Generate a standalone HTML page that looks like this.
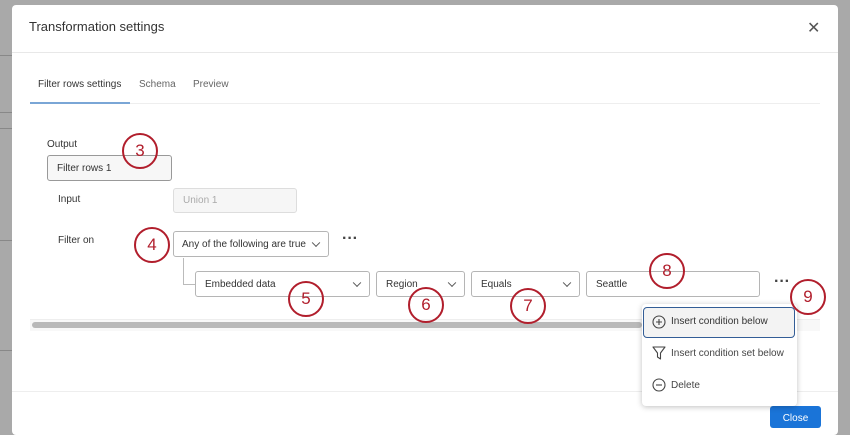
<!DOCTYPE html>
<html><head><style>
*{box-sizing:border-box}
body{margin:0;width:850px;height:425px;overflow:hidden;background:#a9a9a9;font-family:"Liberation Sans",sans-serif;position:relative;color:#333}
.a{position:absolute}
.modal{left:12px;top:5px;width:826px;height:430px;background:#fff;border-radius:4px}
.box{position:absolute;border:1px solid #b5b5b5;border-radius:3px;background:#fff;font-size:10px;color:#333;padding-left:9px;display:flex;align-items:center;white-space:nowrap}
.chev{position:absolute;right:9px;top:50%;width:6px;height:6px;border-right:1.2px solid #555;border-bottom:1.2px solid #555;transform:translateY(-70%) rotate(45deg)}
.c{position:absolute;width:36px;height:36px;border:2.5px solid #b11e2c;border-radius:50%;background:transparent;color:#b11e2c;font-size:17px;display:flex;align-items:center;justify-content:center}
.lbl{position:absolute;font-size:10px;color:#333;white-space:nowrap}
.dots{position:absolute;font-size:16px;color:#444;letter-spacing:0px;font-weight:bold}
</style></head><body>
<div class="a" style="left:0;top:55px;width:12px;height:1px;background:#888"></div>
<div class="a" style="left:0;top:112px;width:12px;height:1px;background:#888"></div>
<div class="a" style="left:0;top:128px;width:12px;height:1px;background:#888"></div>
<div class="a" style="left:0;top:240px;width:12px;height:1px;background:#888"></div>
<div class="a" style="left:0;top:350px;width:12px;height:1px;background:#888"></div>
<div class="a modal"></div>
<div class="a" style="left:29px;top:19px;font-size:13px;color:#333">Transformation settings</div>
<div class="a" style="left:807px;top:18px;font-size:16px;color:#555">✕</div>
<div class="a" style="left:12px;top:52px;width:826px;height:1px;background:#e8e8e8"></div>
<div class="a" style="left:38px;top:79px;font-size:10px;color:#333">Filter rows settings</div>
<div class="a" style="left:139px;top:79px;font-size:10px;color:#666">Schema</div>
<div class="a" style="left:193px;top:79px;font-size:10px;color:#666">Preview</div>
<div class="a" style="left:30px;top:103px;width:790px;height:1px;background:#eee"></div>
<div class="a" style="left:30px;top:102px;width:100px;height:2px;background:#7aa6d6"></div>
<div class="lbl" style="left:47px;top:139px">Output</div>
<div class="box" style="left:47px;top:155px;width:125px;height:26px;background:#f7f7f7;border-color:#999">Filter rows 1</div>
<div class="lbl" style="left:58px;top:194px">Input</div>
<div class="box" style="left:173px;top:188px;width:124px;height:25px;background:#f6f6f6;border-color:#ddd;color:#aaa">Union 1</div>
<div class="lbl" style="left:58px;top:235px">Filter on</div>
<div class="box" style="left:173px;top:231px;width:156px;height:26px;padding-left:8px">Any of the following are true<span class="chev"></span></div>
<div class="dots" style="left:342px;top:230px">···</div>
<div class="a" style="left:183px;top:258px;width:12px;height:27px;border-left:1px solid #bbb;border-bottom:1px solid #bbb"></div>
<div class="box" style="left:195px;top:271px;width:175px;height:26px">Embedded data<span class="chev"></span></div>
<div class="box" style="left:376px;top:271px;width:89px;height:26px">Region<span class="chev"></span></div>
<div class="box" style="left:471px;top:271px;width:109px;height:26px">Equals<span class="chev"></span></div>
<div class="box" style="left:586px;top:271px;width:174px;height:26px">Seattle</div>
<div class="dots" style="left:774px;top:273px">···</div>
<div class="a" style="left:30px;top:319px;width:790px;height:12px;background:#f8f8f8;border-top:1px solid #eee"></div>
<div class="a" style="left:32px;top:322px;width:610px;height:6px;background:#b9b9b9;border-radius:3px"></div>
<div class="a" style="left:12px;top:391px;width:826px;height:1px;background:#eee"></div>
<div class="a" style="left:770px;top:406px;width:51px;height:22px;background:#1a74d8;border-radius:3px;color:#fff;font-size:10px;text-align:center;line-height:26px">Close</div>
<div class="a" style="left:642px;top:304px;width:155px;height:102px;background:#fff;border-radius:4px;box-shadow:0 1px 6px rgba(0,0,0,.25)"></div>
<div class="a" style="left:643px;top:307px;width:152px;height:31px;border:1.5px solid #335d96;border-radius:4px;background:#f3f3f3"></div>
<svg class="a" style="left:652px;top:315px" width="14" height="14"><circle cx="7" cy="7" r="6" fill="none" stroke="#444" stroke-width="1.1"/><path d="M7 4v6M4 7h6" stroke="#444" stroke-width="1.1"/></svg>
<div class="lbl" style="left:671px;top:316px;color:#333">Insert condition below</div>
<svg class="a" style="left:652px;top:346px" width="14" height="14"><path d="M1 1h12L8.5 7v6L5.5 11V7z" fill="none" stroke="#444" stroke-width="1.1" stroke-linejoin="round"/></svg>
<div class="lbl" style="left:671px;top:348px;color:#444">Insert condition set below</div>
<svg class="a" style="left:652px;top:378px" width="14" height="14"><circle cx="7" cy="7" r="6" fill="none" stroke="#444" stroke-width="1.1"/><path d="M4 7h6" stroke="#444" stroke-width="1.1"/></svg>
<div class="lbl" style="left:671px;top:380px;color:#444">Delete</div>
<div class="c" style="left:122px;top:133px">3</div>
<div class="c" style="left:134px;top:227px">4</div>
<div class="c" style="left:288px;top:281px">5</div>
<div class="c" style="left:408px;top:287px">6</div>
<div class="c" style="left:510px;top:288px">7</div>
<div class="c" style="left:649px;top:253px">8</div>
<div class="c" style="left:790px;top:279px">9</div>
</body></html>
